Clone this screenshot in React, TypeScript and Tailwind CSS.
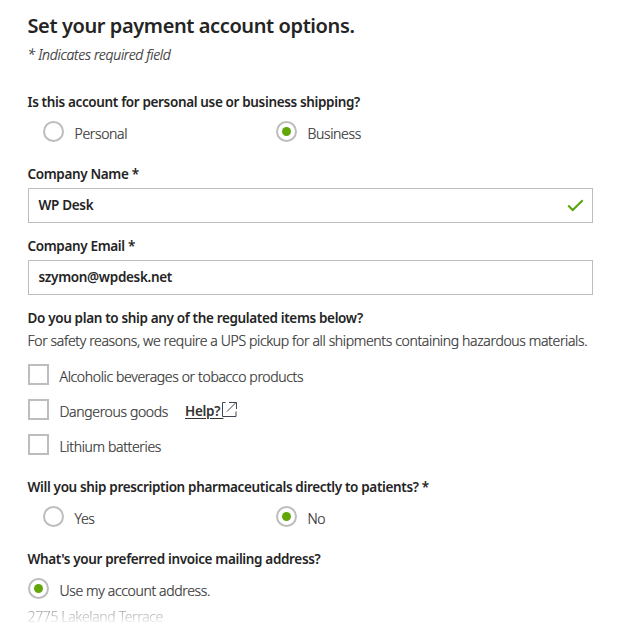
import type { ReactNode } from "react";

type ChoiceProps = {
  label: string;
  checked?: boolean;
  className?: string;
};

function Radio({ label, checked = false, className = "" }: ChoiceProps) {
  return (
    <label className={`flex h-[21px] items-center ${className}`}>
      <span className="flex size-[21px] shrink-0 items-center justify-center rounded-full border-2 border-[#bdbdbd]">
        {checked && <span className="size-[9px] rounded-full bg-[#62a60a]" />}
      </span>
      <span className="ml-[10.5px] pt-1 leading-[18px]">{label}</span>
    </label>
  );
}

function Checkbox({ label, children }: { label: string; children?: ReactNode }) {
  return (
    <div className="flex h-[21px] items-center">
      <span className="size-[21px] shrink-0 border-2 border-[#bdbdbd]" />
      <span className="ml-[10.5px] pt-1 leading-[18px]">{label}</span>
      {children}
    </div>
  );
}

function Question({ children, className = "" }: { children: ReactNode; className?: string }) {
  return (
    <h2 className={`-ml-[0.5px] h-5 whitespace-nowrap text-[13.5px] leading-5 font-semibold tracking-[-0.35px] text-[#242424] [-webkit-text-stroke:0] ${className}`}>
      {children}
    </h2>
  );
}

function Field({ label, value, valid = false }: { label: string; value: string; valid?: boolean }) {
  return (
    <div className="h-[72px]">
      <Question>{label}</Question>
      <div className="mt-1 flex h-[35px] items-center justify-between border border-[#bdbdbd] pr-2 pl-[9.5px]">
        <span className="text-[13.5px] font-semibold tracking-[-0.32px] text-[#242424] [-webkit-text-stroke:0]">{value}</span>
        {valid && (
          <svg width="17" height="13" viewBox="0 0 17 13" fill="none" stroke="#56a30b" strokeWidth="2">
            <path d="M1.2 6.5 5.7 11 15.7 1.2" />
          </svg>
        )}
      </div>
    </div>
  );
}

export default function App() {
  return (
    <main className="h-[637px] overflow-hidden bg-white pt-3 pr-[27px] pl-7 font-['Noto_Sans','Open_Sans',sans-serif] text-[14px] font-light tracking-[-0.355px] text-[#333] [-webkit-text-stroke:0.2px]">
      <h1 className="-ml-[0.5px] h-7 text-[20px] leading-7 font-semibold tracking-[-0.4px] whitespace-nowrap text-[#242424] [-webkit-text-stroke:0]">
        Set your payment account options.
      </h1>
      <p className="mt-[5px] -ml-[0.5px] h-5 leading-5 italic tracking-[-0.28px]">* Indicates required field</p>

      {/* Account type */}
      <Question className="mt-[27px]">Is this account for personal use or business shipping?</Question>
      <div className="mt-[9px] flex pl-[15px]">
        <Radio label="Personal" className="w-[233px]" />
        <Radio label="Business" checked />
      </div>

      <div className="mt-[22px]">
        <Field label="Company Name *" value="WP Desk" valid />
        <Field label="Company Email *" value="szymon@wpdesk.net" />
      </div>

      {/* Regulated items */}
      <Question>Do you plan to ship any of the regulated items below?</Question>
      <p className="mt-[3px] -ml-[0.5px] h-5 leading-5 whitespace-nowrap">
        For safety reasons, we require a UPS pickup for all shipments containing hazardous materials.
      </p>
      <div className="mt-[13px] flex flex-col gap-[14px]">
        <Checkbox label="Alcoholic beverages or tobacco products" />
        <Checkbox label="Dangerous goods">
          <a href="#" className="ml-[17px] flex items-center text-[#333] [-webkit-text-stroke:0]">
            <span className="pt-[3px] text-[13.5px] leading-[18px] font-semibold tracking-[-0.3px] underline underline-offset-2">Help?&nbsp;</span>
            <svg width="15" height="15" viewBox="0 0 15 15" fill="none" stroke="#3d4650" className="-mt-px -ml-px">
              <path d="M3.5.5h-3v14h13.5v-5M5 9.5 14 .5M7 .5h7.5V7" />
            </svg>
          </a>
        </Checkbox>
        <Checkbox label="Lithium batteries" />
      </div>

      <Question className="mt-[22px]">Will you ship prescription pharmaceuticals directly to patients? *</Question>
      <div className="mt-[9px] flex pl-[15px]">
        <Radio label="Yes" className="w-[233px]" />
        <Radio label="No" checked />
      </div>

      {/* Invoice address */}
      <Question className="mt-[22px]">What's your preferred invoice mailing address?</Question>
      <Radio label="Use my account address." checked className="mt-[9px]" />
      <p className="mt-2 -ml-[0.5px] h-[18px] bg-gradient-to-b from-[#888] to-white bg-clip-text leading-5 text-transparent">
        2775 Lakeland Terrace
      </p>
    </main>
  );
}
